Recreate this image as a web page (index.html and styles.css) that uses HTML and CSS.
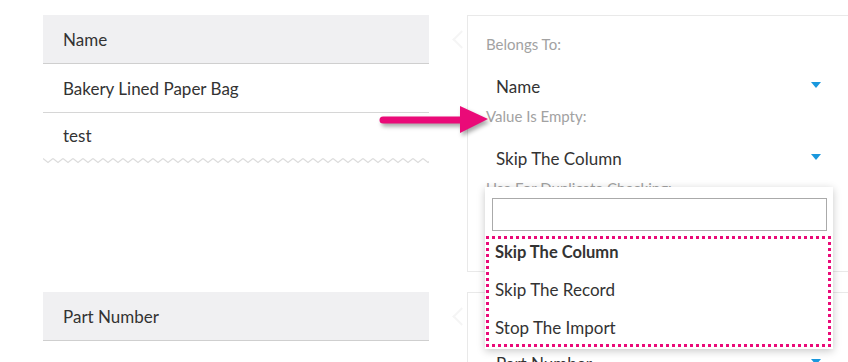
FILE: index.html
```html
<!DOCTYPE html>
<html lang="en">
<head>
    <meta charset="UTF-8">
    <meta name="viewport" content="width=device-width, initial-scale=1.0">
    <link rel="stylesheet" href="styles.css">
    <title>Import Mapping</title>
</head>
<body>

<div class="page">

    <div class="field-row">
        <div class="preview">
            <div class="preview-head">Name</div>
            <div class="preview-cell">Bakery Lined Paper Bag</div>
            <div class="preview-cell last">test</div>
            <svg class="zigzag" width="386" height="7" viewBox="0 0 386 7">
                <defs>
                    <pattern id="zz" width="10" height="7" patternUnits="userSpaceOnUse">
                        <polyline points="0,1.5 5,5.5 10,1.5" fill="none" stroke="#dcdcdc" stroke-width="1.2"/>
                    </pattern>
                </defs>
                <rect width="386" height="7" fill="url(#zz)"/>
            </svg>
        </div>

        <div class="settings">
            <div class="label">Belongs To:</div>
            <div class="select">Name</div>
            <div class="label">Value Is Empty:</div>
            <div class="select">
                Skip The Column
                <div class="dropdown">
                    <input type="text" class="search">
                    <ul class="options">
                        <li class="selected">Skip The Column</li>
                        <li>Skip The Record</li>
                        <li>Stop The Import</li>
                    </ul>
                    <div class="highlight"></div>
                </div>
            </div>
            <div class="label">Use For Duplicate Checking:</div>
            <div class="select">No</div>
        </div>
    </div>

    <div class="field-row">
        <div class="preview">
            <div class="preview-head">Part Number</div>
        </div>

        <div class="settings">
            <div class="label">Belongs To:</div>
            <div class="select">Part Number</div>
        </div>
    </div>

    <!-- annotation arrow -->
    <svg class="pointer" width="120" height="44" viewBox="0 0 120 44">
        <line x1="7" y1="20" x2="88" y2="20" stroke="#ea0a78" stroke-width="7" stroke-linecap="round"/>
        <polygon points="84,6 112,19 84,33" fill="#ea0a78"/>
    </svg>

</div>

</body>
</html>
```

FILE: styles.css
```css
body {
    font-family: Lato, "Open Sans", Arial, sans-serif;
    background-color: #fff;
    color: #333;
    margin: 0;
    padding: 0;
    width: 848px;
    height: 362px;
    overflow: hidden;
}

.page {
    position: relative;
    padding: 15px 0 0 43px;
}

.field-row {
    display: grid;
    grid-template-columns: 386px 420px;
    column-gap: 38px;
    align-items: start;
    margin-bottom: 20px;
}

.preview-head,
.preview-cell {
    height: 48px;
    display: flex;
    align-items: center;
    padding: 0 20px;
    font-size: 17px;
}

.preview-head {
    background-color: #f0f0f2;
    border-bottom: 1px solid #cfcfcf;
}

.preview-cell {
    border-bottom: 1px solid #d6d6d6;
}

.preview-cell.last {
    border-bottom: none;
    height: 44px;
}

.zigzag {
    display: block;
    margin-top: 0;
}

.settings {
    position: relative;
    border: 1px solid #e9e9e9;
    padding: 19px 0 20px 18px;
}

.settings::before {
    content: "";
    position: absolute;
    left: -13px;
    top: 17px;
    width: 11px;
    height: 11px;
    border-left: 2px solid #f5f5f5;
    border-bottom: 2px solid #f5f5f5;
    transform: rotate(45deg);
}

.label {
    font-size: 15px;
    line-height: 18px;
    color: #a2a2a2;
    margin-bottom: 14px;
}

.select {
    position: relative;
    width: 349px;
    height: 40px;
    line-height: 40px;
    padding-left: 10px;
    box-sizing: border-box;
    font-size: 17px;
}

.select::after {
    content: "";
    position: absolute;
    right: 14px;
    top: 15px;
    border-left: 5px solid transparent;
    border-right: 5px solid transparent;
    border-top: 6px solid #1a98dd;
}

.dropdown {
    position: absolute;
    top: 48px;
    left: -1px;
    width: 348px;
    box-sizing: border-box;
    padding: 11px 6px 2px 7px;
    background-color: #fff;
    box-shadow: 0 2px 8px rgba(0, 0, 0, 0.22);
    z-index: 5;
    line-height: normal;
}

.search {
    display: block;
    width: 100%;
    height: 33px;
    box-sizing: border-box;
    border: 1px solid #aaa;
    margin: 0;
}

.options {
    list-style: none;
    margin: 2px 0 0;
    padding: 0;
}

.options li {
    height: 38px;
    line-height: 38px;
    padding: 0 3px;
    font-size: 17px;
}

.options li.selected {
    font-weight: bold;
    font-size: 16.5px;
}

.highlight {
    position: absolute;
    left: 1px;
    right: 2px;
    top: 49px;
    bottom: 2px;
    border: 3px dotted #ea0a78;
}

.pointer {
    position: absolute;
    left: 376px;
    top: 100px;
    filter: drop-shadow(2px 3px 2px rgba(0, 0, 0, 0.35));
}
```
